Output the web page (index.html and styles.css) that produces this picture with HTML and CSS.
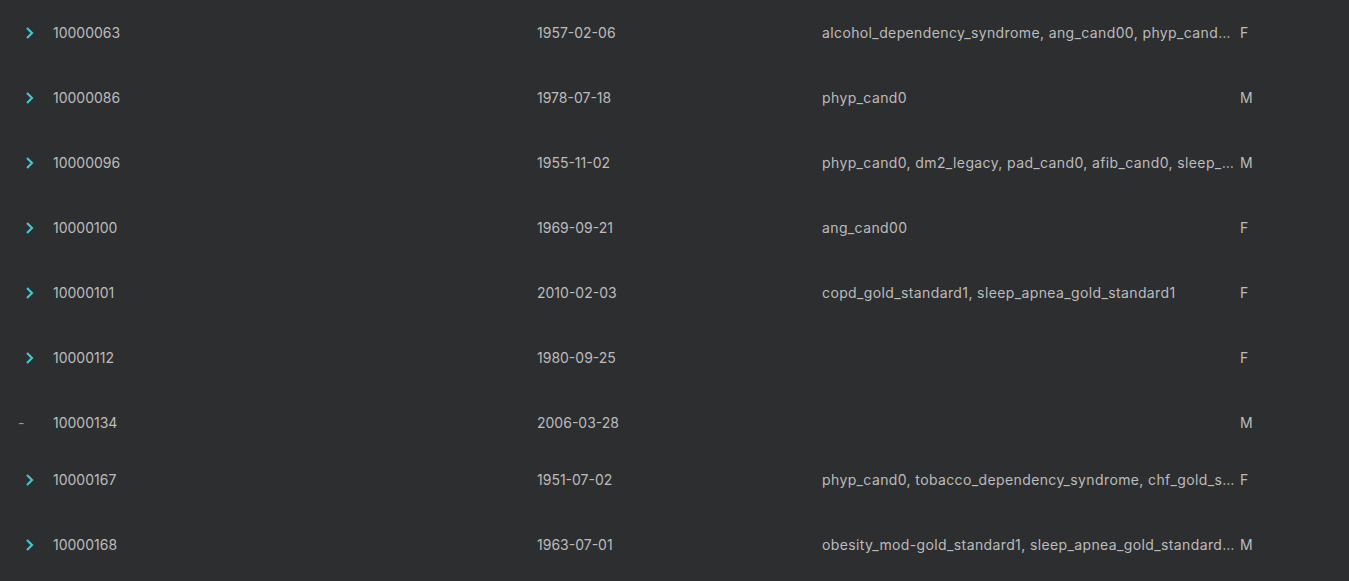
FILE: index.html
```html
<!DOCTYPE html>
<html>
<head>
<meta charset="utf-8">
<link rel="stylesheet" href="styles.css">
</head>
<body>
<div class="table">
  <div class="row">
    <div class="cell expand"><svg class="chev" viewBox="0 0 20 20" width="20" height="20"><path d="M7 5 L12 10 L7 15" /></svg></div>
    <div class="cell">10000063</div>
    <div class="cell">1957-02-06</div>
    <div class="cell cond">alcohol_dependency_syndrome, ang_cand00, phyp_cand0, pad_cand0</div>
    <div class="cell">F</div>
  </div>
  <div class="row">
    <div class="cell expand"><svg class="chev" viewBox="0 0 20 20" width="20" height="20"><path d="M7 5 L12 10 L7 15" /></svg></div>
    <div class="cell">10000086</div>
    <div class="cell">1978-07-18</div>
    <div class="cell cond">phyp_cand0</div>
    <div class="cell">M</div>
  </div>
  <div class="row">
    <div class="cell expand"><svg class="chev" viewBox="0 0 20 20" width="20" height="20"><path d="M7 5 L12 10 L7 15" /></svg></div>
    <div class="cell">10000096</div>
    <div class="cell">1955-11-02</div>
    <div class="cell cond">phyp_cand0, dm2_legacy, pad_cand0, afib_cand0, sleep_apnea_gold_standard1</div>
    <div class="cell">M</div>
  </div>
  <div class="row">
    <div class="cell expand"><svg class="chev" viewBox="0 0 20 20" width="20" height="20"><path d="M7 5 L12 10 L7 15" /></svg></div>
    <div class="cell">10000100</div>
    <div class="cell">1969-09-21</div>
    <div class="cell cond">ang_cand00</div>
    <div class="cell">F</div>
  </div>
  <div class="row">
    <div class="cell expand"><svg class="chev" viewBox="0 0 20 20" width="20" height="20"><path d="M7 5 L12 10 L7 15" /></svg></div>
    <div class="cell">10000101</div>
    <div class="cell">2010-02-03</div>
    <div class="cell cond">copd_gold_standard1, sleep_apnea_gold_standard1</div>
    <div class="cell">F</div>
  </div>
  <div class="row">
    <div class="cell expand"><svg class="chev" viewBox="0 0 20 20" width="20" height="20"><path d="M7 5 L12 10 L7 15" /></svg></div>
    <div class="cell">10000112</div>
    <div class="cell">1980-09-25</div>
    <div class="cell cond"></div>
    <div class="cell">F</div>
  </div>
  <div class="row short">
    <div class="cell expand"><span class="dash">-</span></div>
    <div class="cell">10000134</div>
    <div class="cell">2006-03-28</div>
    <div class="cell cond"></div>
    <div class="cell">M</div>
  </div>
  <div class="row">
    <div class="cell expand"><svg class="chev" viewBox="0 0 20 20" width="20" height="20"><path d="M7 5 L12 10 L7 15" /></svg></div>
    <div class="cell">10000167</div>
    <div class="cell">1951-07-02</div>
    <div class="cell cond">phyp_cand0, tobacco_dependency_syndrome, chf_gold_standard1</div>
    <div class="cell">F</div>
  </div>
  <div class="row">
    <div class="cell expand"><svg class="chev" viewBox="0 0 20 20" width="20" height="20"><path d="M7 5 L12 10 L7 15" /></svg></div>
    <div class="cell">10000168</div>
    <div class="cell">1963-07-01</div>
    <div class="cell cond">obesity_mod-gold_standard1, sleep_apnea_gold_standard1, phyp_cand0</div>
    <div class="cell">M</div>
  </div>
</div>
</body>
</html>
```

FILE: styles.css
```css
html, body {
  margin: 0;
  padding: 0;
  background: #2d2e30;
}
body {
  font-family: Inter, "Noto Sans", sans-serif;
  font-size: 14px;
  color: #bcbcbc;
  height: 581px;
  overflow: hidden;
}
.table {
  display: flex;
  flex-direction: column;
}
.row {
  display: grid;
  grid-template-columns: 53px 484px 285px 418px 1fr;
  align-items: start;
  height: 65px;
  padding-top: 23px;
  box-sizing: border-box;
}
.row.short {
  height: 57px;
}
.cell {
  line-height: 20px;
  white-space: nowrap;
  overflow: hidden;
}
.cond {
  text-overflow: ellipsis;
  letter-spacing: 0.38px;
  padding-right: 2px;
}
.expand {
  height: 20px;
}
.chev {
  display: block;
  margin: 0 0 0 20px;
  fill: none;
  stroke: #3fc6cf;
  stroke-width: 2.2;
}
.dash {
  display: block;
  margin-left: 18px;
  color: #9a9a9a;
}
```
